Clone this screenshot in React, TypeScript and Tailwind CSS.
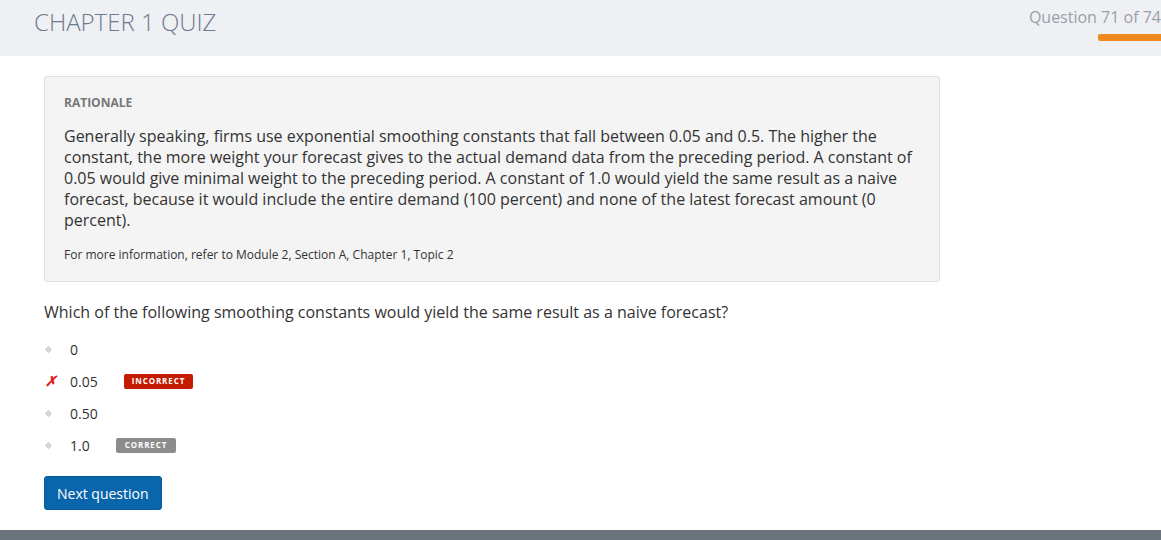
import React from "react";

const OPTIONS = [
  { label: "0", mark: "none" },
  { label: "0.05", mark: "wrong", badge: "INCORRECT" },
  { label: "0.50", mark: "none" },
  { label: "1.0", mark: "none", badge: "CORRECT" },
];

function Diamond() {
  return (
    <svg width="7" height="7" viewBox="0 0 7 7" className="block">
      <path d="M3.5 0.5 L6.5 3.5 L3.5 6.5 L0.5 3.5 Z" fill="#d5d8dc" stroke="#b9bec4" strokeWidth="0.8" />
    </svg>
  );
}

export default function App() {
  return (
    <div
      className="w-[1161px] h-[540px] overflow-hidden bg-white flex flex-col"
      style={{ fontFamily: '"Open Sans", "Liberation Sans", sans-serif' }}
    >
      <header className="h-[56px] shrink-0 bg-[#eff0f4] flex justify-between">
        <h1 className="pl-[34px] pt-[4px] text-[24px] font-light text-[#6b7a8c]">
          CHAPTER 1 QUIZ
        </h1>
        <div className="flex flex-col items-end pt-[5px]">
          <span className="text-[16px] text-[#9aa0a8] leading-[24px] whitespace-nowrap">
            Question 71 of 74
          </span>
          <div className="mt-[5px] w-[63px] h-[7px] bg-[#f08a1e] rounded-l-[2px]" />
        </div>
      </header>

      <main className="flex-1 pl-[44px] pt-[20px]">
        <section className="w-[896px] bg-[#f4f4f4] border border-[#e0e0e0] rounded-[3px] px-[19px] pt-[17px] pb-[17px]">
          <h2 className="text-[12px] font-bold text-[#777] leading-[18px]">RATIONALE</h2>
          <p className="mt-[14px] text-[16px] leading-[21px] text-[#333]">
            Generally speaking, firms use exponential smoothing constants that fall between 0.05 and 0.5. The higher the
            constant, the more weight your forecast gives to the actual demand data from the preceding period. A constant of
            0.05 would give minimal weight to the preceding period. A constant of 1.0 would yield the same result as a naive
            forecast, because it would include the entire demand (100 percent) and none of the latest forecast amount (0
            percent).
          </p>
          <p className="mt-[15px] text-[12px] leading-[18px] text-[#333]">
            For more information, refer to Module 2, Section A, Chapter 1, Topic 2
          </p>
        </section>

        <p className="mt-[18px] text-[16px] leading-[24px] text-[#333]">
          Which of the following smoothing constants would yield the same result as a naive forecast?
        </p>

        <ul className="mt-[13px] flex flex-col gap-[8px]">
          {OPTIONS.map((o) => (
            <li key={o.label} className="flex items-center h-[24px] text-[14px] text-[#333]">
              <span className="w-[26px] flex justify-start pl-[1px]">
                {o.mark === "wrong" ? (
                  <span className="text-[#e41b1b] text-[14px] font-bold italic leading-none">✗</span>
                ) : (
                  <Diamond />
                )}
              </span>
              <span>{o.label}</span>
              {o.badge === "INCORRECT" && (
                <span className="ml-[26px] h-[15px] px-[8px] flex items-center rounded-[2px] bg-[#c41a00] text-white text-[8px] font-bold tracking-[0.9px]">
                  INCORRECT
                </span>
              )}
              {o.badge === "CORRECT" && (
                <span className="ml-[26px] h-[15px] px-[9px] flex items-center rounded-[2px] bg-[#8c8c8c] text-white text-[8px] font-bold tracking-[0.9px]">
                  CORRECT
                </span>
              )}
            </li>
          ))}
        </ul>

        <button className="mt-[19px] h-[34px] px-[12px] bg-[#0a66ac] border border-[#075a99] rounded-[3px] text-white text-[14px]">
          Next question
        </button>
      </main>

      <footer className="h-[10px] shrink-0 bg-[#6b747c]" />
    </div>
  );
}
